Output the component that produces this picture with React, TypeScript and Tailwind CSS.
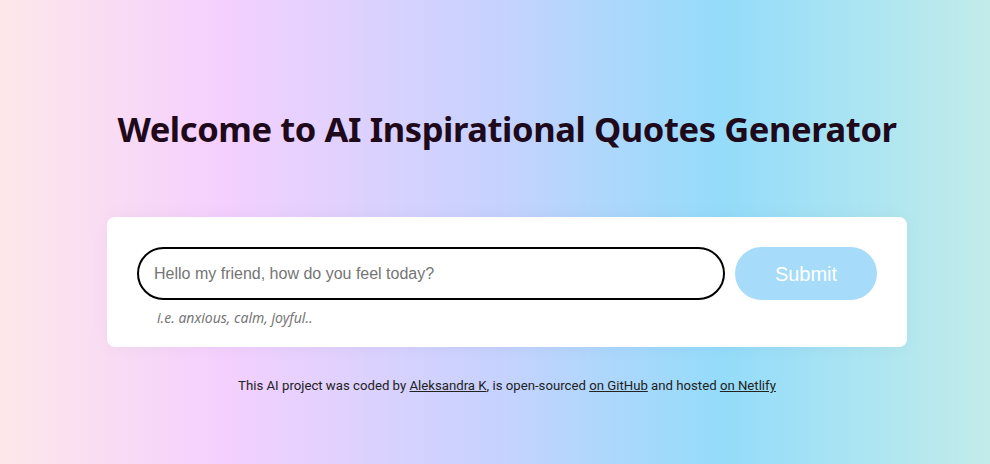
import React, { useState } from 'react';

export default function App() {
  const [feeling, setFeeling] = useState('');

  return (
    <div className="min-h-[464px] w-full bg-[linear-gradient(90deg,#fde8e9_0%,#f5d0fe_22%,#c7d2fe_50%,#94dcfa_73%,#c2ecea_100%)] pl-[24px]">
      <div className="mx-auto flex w-[800px] flex-col items-center pt-[107px]">
        <h1 className="whitespace-nowrap font-['Noto_Sans',sans-serif] text-[34.5px] font-bold leading-[44px] tracking-[-0.4px] text-[#1f0a1c]">
          Welcome to AI Inspirational Quotes Generator
        </h1>

        <form
          className="mt-[66px] w-[800px] rounded-lg bg-white px-[30px] pt-[30px] pb-[20px] shadow-[0_0_20px_rgba(0,0,0,0.04)]"
          onSubmit={(e) => e.preventDefault()}
        >
          <div className="flex items-center gap-[10px]">
            <input
              type="text"
              value={feeling}
              onChange={(e) => setFeeling(e.target.value)}
              placeholder="Hello my friend, how do you feel today?"
              className="h-[53px] w-[588px] rounded-full border-2 border-black px-[15px] font-['Liberation_Sans',Arial,sans-serif] text-[16px] text-black placeholder:text-[#757575] focus:outline-none"
            />
            <button
              type="submit"
              className="h-[53px] w-[142px] rounded-full bg-[#a6dbfa] font-['Liberation_Sans',Arial,sans-serif] text-[20px] text-white"
            >
              Submit
            </button>
          </div>
          <p className="mt-[9px] pl-[20px] font-['Noto_Sans',sans-serif] text-[14px] italic leading-[18px] text-[#777]">
            i.e. anxious, calm, joyful..
          </p>
        </form>

        <p className="mt-[29px] font-['Roboto',sans-serif] text-[13.2px] text-[#222]">
          This AI project was coded by{' '}
          <a href="#" className="underline">Aleksandra K</a>, is open-sourced{' '}
          <a href="#" className="underline">on GitHub</a> and hosted{' '}
          <a href="#" className="underline">on Netlify</a>
        </p>
      </div>
    </div>
  );
}
